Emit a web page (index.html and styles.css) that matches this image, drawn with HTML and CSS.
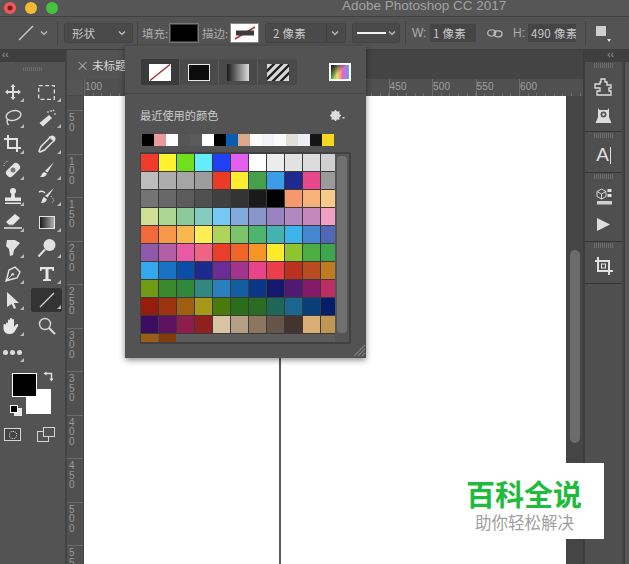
FILE: index.html
```html
<!DOCTYPE html>
<html lang="zh">
<head>
<meta charset="utf-8">
<title>Adobe Photoshop CC 2017</title>
<link rel="stylesheet" href="styles.css">
</head>
<body>
<div class="app">
  <header class="titlebar">
    <div class="lights"><i class="light red"></i><i class="light yellow"></i><i class="light green"></i></div>
    <div class="title">Adobe Photoshop CC 2017</div>
  </header>

  <div class="options">
    <svg class="opt-line" width="18" height="18" viewBox="0 0 18 18"><path d="M2 16 16 2" stroke="#cfcfcf" stroke-width="1.2"/></svg>
    <svg class="chev chev-tool" width="8" height="6" viewBox="0 0 8 6"><path d="M1 1.5 4 4.5 7 1.5" fill="none" stroke="#c4c4c4" stroke-width="1.2"/></svg>
    <span class="sep sep-a"></span>
    <div class="select sel-shape"><span>形状</span><svg class="chev" width="8" height="6" viewBox="0 0 8 6"><path d="M1 1.5 4 4.5 7 1.5" fill="none" stroke="#c4c4c4" stroke-width="1.2"/></svg></div>
    <span class="sep sep-b"></span>
    <span class="opt-label lab-fill">填充:</span>
    <span class="swatch-btn"><i class="fill-black"></i></span>
    <span class="opt-label lab-stroke">描边:</span>
    <span class="swatch-btn stroke-btn"><svg width="24" height="14" viewBox="0 0 24 14"><rect width="24" height="14" fill="#fff"/><path d="M2 13 22 1" stroke="#a8323c" stroke-width="1.5"/><rect x="3" y="4.500" width="18" height="5" fill="#3a3a3a"/></svg></span>
    <div class="select sel-size"><span>2 像素</span><b class="split"></b><svg class="chev" width="8" height="6" viewBox="0 0 8 6"><path d="M1 1.5 4 4.5 7 1.5" fill="none" stroke="#c4c4c4" stroke-width="1.2"/></svg></div>
    <div class="select sel-line"><i class="line-sample"></i><svg class="chev" width="8" height="6" viewBox="0 0 8 6"><path d="M1 1.5 4 4.5 7 1.5" fill="none" stroke="#c4c4c4" stroke-width="1.2"/></svg></div>
    <span class="sep sep-c"></span>
    <span class="opt-label lab-w">W:</span>
    <span class="field field-w">1 像素</span>
    <svg class="link" width="16" height="9" viewBox="0 0 16 9"><g fill="none" stroke="#bdbdbd" stroke-width="1.200"><rect x=".7" y="1" width="8" height="6" rx="3"/><rect x="7" y="1.800" width="8" height="6" rx="3"/></g></svg>
    <span class="opt-label lab-h">H:</span>
    <span class="field field-h">490 像素</span>
    <span class="sep sep-d"></span>
    <span class="path-op"><i></i><b></b></span>
  </div>

  <div class="workspace">
    <aside class="toolbox">
      <div class="collapse">‹‹</div>
      <div class="grip"></div>
      <div class="tools">
        <div class="tool more"><svg width="18" height="18" viewBox="0 0 18 18"><path d="M9 1 11.500 4H10v4h4V6.500L17 9l-3 2.500V10h-4v4h1.500L9 17l-2.500-3H8v-4H4v1.500L1 9l3-2.500V8h4V4H6.500z" fill="#dcdcdc"/></svg></div>
        <div class="tool more"><svg width="17" height="15" viewBox="0 0 17 15"><rect x=".7" y=".7" width="15.600" height="13.600" fill="none" stroke="#dcdcdc" stroke-width="1.300" stroke-dasharray="4 2.500"/></svg></div>
        <div class="tool more"><svg width="18" height="18" viewBox="0 0 18 18"><ellipse cx="9.500" cy="6.500" rx="7.500" ry="4.800" transform="rotate(-15 9.500 6.500)" fill="none" stroke="#dcdcdc" stroke-width="1.400"/><path d="M4 10c-1.500 2-1 4 .5 6" fill="none" stroke="#dcdcdc" stroke-width="1.400"/></svg></div>
        <div class="tool more"><svg width="18" height="18" viewBox="0 0 18 18"><path d="M11 6 14 9 5 17.500 1.500 14z" fill="#e2e2e2"/><path d="M13 1v2M16 5h2M9 3h2M16 1l-1 1" stroke="#e2e2e2" stroke-width="1.200"/></svg></div>
        <div class="tool more"><svg width="20" height="20" viewBox="0 0 20 20"><path d="M5 1v13h13M1 5h13v13" fill="none" stroke="#e2e2e2" stroke-width="2"/></svg></div>
        <div class="tool more"><svg width="18" height="18" viewBox="0 0 18 18"><path d="M12 2l4 4-2 1.500-7.500 7.500L2 17l-1-1 2-4.500L10.500 4z" fill="none" stroke="#e2e2e2" stroke-width="1.500"/><path d="M12 1.500a2.500 2.500 0 0 1 4.500 4.500z" fill="#e2e2e2"/></svg></div>
        <div class="tool more"><svg width="20" height="20" viewBox="0 0 20 20"><rect x="2" y="6" width="16" height="8" rx="3.500" transform="rotate(-45 10 10)" fill="#e4e4e4"/><circle cx="10" cy="10" r="2.500" fill="#777"/><path d="M1 6a5 5 0 0 1 5-5" fill="none" stroke="#e4e4e4" stroke-dasharray="1 1.500"/></svg></div>
        <div class="tool more"><svg width="18" height="18" viewBox="0 0 18 18"><path d="M16 1 9.500 11.500 7 10z" fill="#e2e2e2"/><path d="M6 11c-2 .5-2 3-4 5 3 .5 6-.5 7-3.500z" fill="#e2e2e2"/></svg></div>
        <div class="tool more"><svg width="18" height="18" viewBox="0 0 18 18"><circle cx="9" cy="4" r="3" fill="#e6e6e6"/><path d="M7.500 6h3l.5 4.500h6V14H1v-3.500h6z" fill="#e6e6e6"/><rect x="1" y="15.500" width="16" height="1.500" fill="#e6e6e6"/></svg></div>
        <div class="tool more"><svg width="18" height="18" viewBox="0 0 18 18"><path d="M16 1 9.500 10.500 7 9z" fill="#e2e2e2"/><path d="M6 10c-1.500.5-1.500 3-3 6 3 0 5-1 6-3.500z" fill="#e2e2e2"/><path d="M1 5c2-1 4-1 6 1" stroke="#e2e2e2" stroke-width="1.500" fill="none"/><path d="M13 9l3 4-2 3" fill="none" stroke="#e2e2e2" stroke-dasharray="1 1.300"/></svg></div>
        <div class="tool more"><svg width="20" height="18" viewBox="0 0 20 18"><path d="M12 1l5 4-7 7H6L3 9z" fill="#e6e6e6"/><path d="M3 9l3 3h4" fill="none" stroke="#888"/><path d="M1 15h18" stroke="#e6e6e6" stroke-width="1.500"/></svg></div>
        <div class="tool more"><span class="gradient-ico"></span></div>
        <div class="tool more"><svg width="20" height="20" viewBox="0 0 20 20"><path d="M4 2h8l5 3-6 7-1 5-3 1-1-7-3-3z" fill="#e2e2e2"/></svg></div>
        <div class="tool more"><svg width="20" height="20" viewBox="0 0 20 20"><circle cx="12.500" cy="7" r="6" fill="#e2e2e2"/><path d="M8 11.500 1.500 18.500" stroke="#e2e2e2" stroke-width="2"/></svg></div>
        <div class="tool more"><svg width="18" height="18" viewBox="0 0 18 18"><path d="M11 2 16 7l-3 6-8 2-3 1 1-3 2-8z" fill="none" stroke="#e2e2e2" stroke-width="1.400"/><path d="M3 15 8 10" stroke="#e2e2e2"/><circle cx="8.800" cy="9.200" r="1.300" fill="#e2e2e2"/></svg></div>
        <div class="tool more"><svg width="16" height="16" viewBox="0 0 16 16"><path d="M1 1h14v4h-1.300l-.7-1.800H9.500v9.600L12 13.500V15H4v-1.500l2.500-.7V3.200H3L2.300 5H1z" fill="#e6e6e6"/></svg></div>
        <div class="tool more"><svg width="14" height="18" viewBox="0 0 14 18"><path d="M1 1 13 12H7.800L10 17l-2 1-2.300-5L1 16z" fill="#e2e2e2"/></svg></div>
        <div class="tool more active"><svg width="18" height="18" viewBox="0 0 18 18"><path d="M2 16 16 2" stroke="#d8d8d8" stroke-width="1.200"/></svg></div>
        <div class="tool more"><svg width="20" height="20" viewBox="0 0 20 20"><path d="M3 10V7.500a1 1 0 0 1 2 0V10V4.500a1 1 0 0 1 2 0V9V3a1 1 0 0 1 2 0v6V4a1 1 0 0 1 2 0v7l2-2.500c1.500-1.500 3 0 2 1.500l-3 5c-1 2-2.500 3-5 3-4 0-6-2-6.500-5L.500 9c0-1.500 1.500-1.500 2.500 0z" fill="#e8e8e8"/></svg></div>
        <div class="tool"><svg width="18" height="18" viewBox="0 0 18 18"><circle cx="7" cy="7" r="5.500" fill="none" stroke="#d8d8d8" stroke-width="1.400"/><path d="M11 11l6 6" stroke="#d8d8d8" stroke-width="2.200"/></svg></div>
        <div class="tool more"><span class="dots"><i></i><i></i><i></i></span></div>
      </div>
      <div class="colors">
        <i class="fg"></i><i class="bg"></i>
        <svg class="swap" width="11" height="11" viewBox="0 0 11 11"><path d="M3 2.500h5.500V8" fill="none" stroke="#e0e0e0" stroke-width="1.300"/><path d="M3.500 .5v4L.5 2.500zM6.500 7.500h4L8.500 10.500z" fill="#e0e0e0"/></svg>
        <i class="mini-bg"></i><i class="mini-fg"></i>
      </div>
      <div class="modes">
        <span class="mask"><i></i></span>
        <svg class="more-s" width="18" height="15" viewBox="0 0 18 15"><rect x=".5" y="4.500" width="11" height="10" fill="none" stroke="#d4d4d4"/><rect x="6.500" y=".5" width="11" height="9" fill="#535353" stroke="#d4d4d4"/></svg>
      </div>
    </aside>

    <main class="docs">
      <div class="tabs">
        <div class="tab"><span class="tab-x">×</span><span class="tab-name">未标题-1</span></div>
      </div>
      <div class="doc-body">
        <div class="v-side">
          <div class="corner"></div>
          <div class="v-ruler">
            <div class="v-first"></div>
            <div class="v-cell">50</div><div class="v-cell">100</div><div class="v-cell">150</div><div class="v-cell">200</div><div class="v-cell">250</div><div class="v-cell">300</div><div class="v-cell">350</div><div class="v-cell">400</div><div class="v-cell">450</div><div class="v-cell">500</div><div class="v-cell">550</div>
          </div>
        </div>
        <div class="stage">
          <div class="h-ruler">
            <div class="h-cell">100</div><div class="h-cell">150</div><div class="h-cell">200</div><div class="h-cell">250</div><div class="h-cell">300</div><div class="h-cell">350</div><div class="h-cell">400</div><div class="h-cell">450</div><div class="h-cell">500</div><div class="h-cell">550</div><div class="h-cell">600</div>
          </div>
          <div class="canvas-row">
            <div class="canvas"><i class="guide"></i></div>
            <div class="scroll-gutter"><i class="thumb"></i></div>
          </div>
        </div>
      </div>
    </main>

    <aside class="dock">
      <div class="collapse dock-head">‹‹</div>
      <div class="dock-col">
        <section class="dock-group g1"><div class="grip small"></div>
          <svg width="19" height="19" viewBox="0 0 19 19"><path d="M7 1h4v3h2v3h4v3h-2v3h2v4H3v-4h3v-3H1V6h5V4h1z" fill="none" stroke="#e0e0e0" stroke-width="1.300"/></svg>
          <svg width="17" height="17" viewBox="0 0 17 17"><path d="M3 1l1.500 2h8L14 1v9l2.500 6h-16L3 10z" fill="#dcdcdc"/><circle cx="8.500" cy="7.500" r="3" fill="#565656"/><circle cx="8.500" cy="7.500" r="1.200" fill="#dcdcdc"/></svg>
        </section>
        <section class="dock-group g2"><div class="grip small"></div>
          <span class="char-a">A<i></i></span>
        </section>
        <section class="dock-group g3"><div class="grip small"></div>
          <svg width="16" height="18" viewBox="0 0 16 18"><path d="M5.500 2 10 4.500v5L5.500 12 1 9.500v-5z" fill="none" stroke="#d8d8d8"/><path d="M1 4.500 5.500 7 10 4.500M5.500 7v5" fill="none" stroke="#d8d8d8"/><rect x="11.500" y="2" width="4" height="3" fill="#e0e0e0"/><rect x="11.500" y="7" width="4" height="3" fill="#e0e0e0"/><rect x="1" y="14" width="15" height="3.500" fill="#cfcfcf"/></svg>
          <svg class="play" width="15" height="15" viewBox="0 0 15 15"><path d="M1 1 14 7.500 1 14z" fill="#dedede"/></svg>
        </section>
        <section class="dock-group g4"><div class="grip small"></div>
          <svg width="20" height="20" viewBox="0 0 20 20"><path d="M4 1v14h15M1 5h14v14" fill="none" stroke="#e0e0e0" stroke-width="2"/><rect x="7.500" y="8" width="4" height="4" fill="none" stroke="#e0e0e0"/></svg>
        </section>
        <section class="dock-group g5"></section>
      </div>
      <div class="dock-edge"></div>
    </aside>
  </div>

  <div class="popup">
    <div class="fill-types">
      <div class="types">
        <span class="type pressed"><svg width="22" height="17" viewBox="0 0 22 17"><rect width="22" height="17" fill="#fff"/><path d="M1 16.500 21 .5" stroke="#a52f3a" stroke-width="1.400"/></svg></span>
        <span class="type"><i class="t-solid"></i></span>
        <span class="type"><i class="t-grad"></i></span>
        <span class="type"><svg width="22" height="17" viewBox="0 0 22 17"><rect width="22" height="17" fill="#d8d8d8"/><path d="M-2 9 9-2M-2 17 17-2M4 19 23 0M12 19 24 7" stroke="#222" stroke-width="2.400"/></svg></span>
      </div>
      <span class="picker"><i></i></span>
    </div>
    <div class="recent-head"><span>最近使用的颜色</span>
      <svg width="15" height="11" viewBox="0 0 15 11"><circle cx="5.500" cy="5.500" r="3.300" fill="none" stroke="#dedede" stroke-width="2.400"/><path d="M5.500 0v11M0 5.500h11M1.600 1.600l7.800 7.800M9.400 1.600 1.600 9.400" stroke="#dedede" stroke-width="1.400"/><rect x="12.500" y="7" width="2" height="1.500" fill="#dedede"/></svg>
    </div>
    <div class="recent">
      <i style="background:#000"></i><i style="background:#ea9a9a"></i><i style="background:#fff"></i><i style="background:#565656"></i><i style="background:#5a5a5a"></i><i style="background:#fff"></i><i style="background:#000"></i><i style="background:#0a5cb0"></i><i style="background:#dba98a"></i><i style="background:#fafafa"></i><i style="background:#f2f3f8"></i><i style="background:#fafafa"></i><i style="background:#e0e0d8"></i><i style="background:#eceef2"></i><i style="background:#141414"></i><i style="background:#f4d820"></i>
    </div>
    <div class="presets">
      <div class="preset-grid">
        <i style="background:#f03c2a"></i><i style="background:#fdf22f"></i><i style="background:#6fe01c"></i><i style="background:#62edfd"></i><i style="background:#2040f5"></i><i style="background:#e45ff0"></i><i style="background:#fefefe"></i><i style="background:#ececec"></i><i style="background:#e2e2e2"></i><i style="background:#dcdcdc"></i><i style="background:#d0d0d0"></i>
        <i style="background:#bdbdbd"></i><i style="background:#adadad"></i><i style="background:#a5a5a5"></i><i style="background:#9c9c9c"></i><i style="background:#e93b26"></i><i style="background:#fdec30"></i><i style="background:#46a04a"></i><i style="background:#3a9de8"></i><i style="background:#1e2a90"></i><i style="background:#e8478a"></i><i style="background:#9a9a9a"></i>
        <i style="background:#747474"></i><i style="background:#686868"></i><i style="background:#5c5c5c"></i><i style="background:#505050"></i><i style="background:#404040"></i><i style="background:#333"></i><i style="background:#1a1a1a"></i><i style="background:#000"></i><i style="background:#f4996c"></i><i style="background:#f7b27c"></i><i style="background:#f9c98a"></i>
        <i style="background:#cde096"></i><i style="background:#add695"></i><i style="background:#8bcb98"></i><i style="background:#84cbc0"></i><i style="background:#74c8f2"></i><i style="background:#84a9dc"></i><i style="background:#8896cc"></i><i style="background:#9a82c0"></i><i style="background:#b288c0"></i><i style="background:#c688bc"></i><i style="background:#f0a0c4"></i>
        <i style="background:#f26a3a"></i><i style="background:#f6974a"></i><i style="background:#f9b84e"></i><i style="background:#fdee55"></i><i style="background:#b0d45a"></i><i style="background:#7cc36a"></i><i style="background:#4cb46e"></i><i style="background:#44b2ae"></i><i style="background:#3cb4ea"></i><i style="background:#4486d0"></i><i style="background:#5068b8"></i>
        <i style="background:#8c5aa8"></i><i style="background:#b45ea8"></i><i style="background:#e85aa8"></i><i style="background:#ee6482"></i><i style="background:#ea3e2a"></i><i style="background:#f0642a"></i><i style="background:#f79428"></i><i style="background:#fdea2a"></i><i style="background:#8ec42e"></i><i style="background:#4cae42"></i><i style="background:#3ca64c"></i>
        <i style="background:#34a8ec"></i><i style="background:#1a72c4"></i><i style="background:#0b4ea8"></i><i style="background:#1c2a8e"></i><i style="background:#6a2c96"></i><i style="background:#a0348e"></i><i style="background:#e84488"></i><i style="background:#ea3e4c"></i><i style="background:#bc3020"></i><i style="background:#b84c20"></i><i style="background:#c07a20"></i>
        <i style="background:#6e9a14"></i><i style="background:#3a8a2c"></i><i style="background:#30883a"></i><i style="background:#308880"></i><i style="background:#2a80bc"></i><i style="background:#135ea2"></i><i style="background:#0a3688"></i><i style="background:#14186e"></i><i style="background:#501a72"></i><i style="background:#821a68"></i><i style="background:#be2c66"></i>
        <i style="background:#961c10"></i><i style="background:#9c3412"></i><i style="background:#a05e12"></i><i style="background:#a69818"></i><i style="background:#487a0c"></i><i style="background:#2a6e1a"></i><i style="background:#2a6c24"></i><i style="background:#1e6656"></i><i style="background:#1a6690"></i><i style="background:#0a3e78"></i><i style="background:#041e6a"></i>
        <i style="background:#3c0e62"></i><i style="background:#5e1260"></i><i style="background:#8e1c4e"></i><i style="background:#902020"></i><i style="background:#d8c4a4"></i><i style="background:#b49e84"></i><i style="background:#8c7660"></i><i style="background:#64544a"></i><i style="background:#44342e"></i><i style="background:#d8ae74"></i><i style="background:#c09656"></i>
        <i class="short" style="background:#9a5e16"></i><i class="short" style="background:#843c0a"></i>
      </div>
      <div class="preset-scroll"><i></i></div>
    </div>
    <svg class="resize" width="11" height="11" viewBox="0 0 11 11"><path d="M0 11 11 0M4 11 11 4M8 11 11 8" stroke="#808080" stroke-width="1.200"/></svg>
  </div>

  <div class="mark">
    <div class="mark-title">百科全说</div>
    <div class="mark-sub">助你轻松解决</div>
  </div>
</div>
</body>
</html>
```

FILE: styles.css
```css
* { box-sizing: border-box; }
html, body { margin: 0; height: 100%; overflow: hidden; }
body { font-family: "Liberation Sans", "Noto Sans CJK SC", sans-serif; background: #535353; color: #c8c8c8; }
i, b { display: block; font-style: normal; }

.app { position: relative; width: 629px; height: 564px; display: flex; flex-direction: column; overflow: hidden; }

.titlebar { height: 17px; flex: none; display: flex; align-items: center; background: #565656; border-bottom: 1px solid #3f3f3f; position: relative; }
.lights { display: flex; gap: 9px; padding-left: 4px; margin-top: -1px; }
.light { width: 12px; height: 12px; border-radius: 50%; }
.red { background: radial-gradient(circle, #7c1a1a 0 2px, #f0565a 3px); }
.yellow { background: #f5b935; }
.green { background: #45c243; }
.title { margin-left: 284px; margin-top: -5px; font-size: 13.500px; color: #a2a2a2; white-space: nowrap; }

.options { height: 33px; flex: none; display: flex; align-items: center; background: #535353; border-bottom: 1px solid #3d3d3d; font-family: "Noto Sans CJK SC", sans-serif; font-size: 11.500px; }
.opt-line { margin-left: 17px; }
.chev-tool { margin-left: 5px; }
.sep { width: 1px; height: 24px; background: #464646; flex: none; }
.sep-a { margin-left: 9px; }
.sep-b { margin-left: 4px; }
.sep-c { margin-left: 5px; }
.sep-d { margin-left: 9px; }
.select { height: 20px; display: flex; align-items: center; justify-content: space-between; background: #4a4a4a; border: 1px solid #444; padding: 0 6px 0 7px; border-radius: 2px; color: #c8c8c8; flex: none; }
.sel-shape { width: 69px; margin-left: 6px; }
.sel-size { width: 81px; margin-left: 6px; letter-spacing: .3px; }
.split { width: 1px; height: 18px; background: #3e3e3e; margin-left: auto; margin-right: 4px; }
.sel-line { width: 48px; margin-left: 6px; padding-left: 4px; padding-right: 3px; }
.line-sample { width: 29px; height: 2px; background: #f2f2f2; }
.opt-label { flex: none; color: #adadad; }
.lab-fill { margin-left: 4px; width: 27px; }
.lab-stroke { margin-left: 3px; width: 28px; }
.swatch-btn { width: 30px; height: 20px; border: 1px solid #777; background: #3e3e3e; display: flex; align-items: center; justify-content: center; flex: none; }
.fill-black { width: 26px; height: 16px; background: #000; }
.stroke-btn { background: #fff; width: 29px; border-color: #888; }
.lab-w { margin-left: 6px; width: 18px; font-family: "Liberation Sans", sans-serif; font-size: 12px; }
.lab-h { margin-left: 10px; width: 15px; font-family: "Liberation Sans", sans-serif; font-size: 12px; }
.field { height: 18px; background: #454545; color: #c8c8c8; display: flex; align-items: center; padding-left: 3px; white-space: nowrap; overflow: hidden; letter-spacing: .3px; flex: none; }
.field-w { width: 46px; }
.field-h { width: 48px; }
.link { margin-left: 11px; }
.path-op { position: relative; width: 12px; height: 18px; margin-left: 10px; }
.path-op i { width: 10px; height: 10px; background: #cfcfcf; margin-top: 2px; }
.path-op b { position: absolute; right: -3px; bottom: 0; width: 0; height: 0; border: 2px solid transparent; border-top: 3px solid #e0e0e0; border-bottom: 0; }

.workspace { flex: 1; min-height: 0; display: flex; }

.toolbox { width: 67px; flex: none; background: #535353; border-right: 2px solid #434343; }
.collapse { height: 12px; background: #3f3f3f; color: #9c9c9c; font-size: 10px; line-height: 10px; padding-left: 2px; }
.grip { height: 17px; background: repeating-linear-gradient(90deg, #6a6a6a 0 1px, transparent 1px 2px) center 5px / 20px 4px no-repeat; }
.tools { display: grid; grid-template-columns: 25px 31px; column-gap: 6px; grid-auto-rows: 26px; }
.tool { position: relative; display: flex; align-items: center; justify-content: center; border-radius: 2px; }
.tool.more::after { content: ""; position: absolute; right: 1px; bottom: 3px; border: 2px solid transparent; border-right-color: #b8b8b8; border-bottom-color: #b8b8b8; }
.tool.active { background: #333; height: 24px; margin-top: 1px; }
.gradient-ico { width: 16px; height: 13px; border: 1px solid #e4e4e4; background: linear-gradient(90deg, #1a1a1a, #b0b0b0); }
.dots { display: flex; gap: 2px; }
.dots i { width: 5px; height: 5px; border-radius: 50%; background: #dcdcdc; }
.colors { position: relative; height: 52px; margin-top: 8px; }
.colors i { position: absolute; }
.fg { left: 12px; top: 0; width: 25px; height: 24px; background: #000; border: 1px solid #fff; z-index: 1; }
.bg { left: 26px; top: 16px; width: 25px; height: 25px; background: #fff; }
.swap { position: absolute; left: 43px; top: -2px; }
.mini-fg { left: 10px; top: 32px; width: 8px; height: 8px; background: #000; border: 1px solid #fff; }
.mini-bg { left: 14px; top: 35px; width: 8px; height: 8px; background: #e8e8e8; }
.modes { display: flex; align-items: center; gap: 16px; padding-left: 4px; margin-top: 2px; }
.mask { width: 17px; height: 13px; border: 1px solid #d4d4d4; display: flex; align-items: center; justify-content: center; background: #444; }
.mask i { width: 8px; height: 8px; border-radius: 50%; border: 1px dotted #e8e8e8; }

.docs { flex: 1; min-width: 0; display: flex; flex-direction: column; background: #434343; }
.tabs { height: 29px; flex: none; background: #444; }
.tab { width: 120px; height: 29px; background: #535353; display: flex; align-items: center; font-family: "Noto Sans CJK SC", sans-serif; font-size: 11.500px; color: #d8d8d8; }
.tab-x { margin-left: 9px; width: 16px; font-size: 13px; color: #b0b0b0; }
.doc-body { flex: 1; min-height: 0; display: flex; }
.v-side { width: 17px; flex: none; display: flex; flex-direction: column; background: #505050; }
.corner { height: 17px; flex: none; background: #555; border-bottom: 1px solid #494949; border-right: 1px solid #494949; }
.v-ruler { flex: 1; min-height: 0; overflow: hidden; border-right: 1px solid #454545; }
.v-first { height: 14px; }
.v-cell { height: 43.500px; border-top: 1px solid #6a6a6a; width: 100%; padding: 2px 8px 0 2px; font-size: 10px; line-height: 9.500px; color: #989898; word-break: break-all; overflow: hidden; }
.stage { flex: 1; min-width: 0; display: flex; flex-direction: column; }
.h-ruler { height: 17px; flex: none; display: flex; background-color: #505050; background-image: repeating-linear-gradient(90deg, #6c6c6c 0 1px, transparent 1px 8.700px); background-size: 100% 3px; background-position: 0 bottom; background-repeat: no-repeat; overflow: hidden; }
.h-cell { width: 43.500px; flex: none; border-left: 1px solid #6c6c6c; padding-left: 0; font-size: 10px; line-height: 16px; color: #a0a0a0; letter-spacing: .2px; }
.canvas-row { flex: 1; min-height: 0; display: flex; }
.canvas { width: 482px; flex: none; background: #fff; position: relative; }
.guide { position: absolute; left: 195px; top: 0; bottom: 0; width: 2px; background: #5a5a5a; }
.scroll-gutter { flex: 1; background: #454545; position: relative; }
.thumb { position: absolute; left: 4px; top: 154px; width: 10px; height: 193px; border-radius: 5px; background: #6b6b6b; }

.dock { width: 46px; flex: none; display: flex; flex-wrap: wrap; align-content: flex-start; background: #444; border-left: 1px solid #3c3c3c; }
.dock-head { width: 100%; height: 12px; text-align: center; padding-left: 8px; background: #3f3f3f; }
.dock-col { width: 38px; background: #4f4f4f; height: 502px; border-left: 1px solid #3d3d3d; }
.dock-edge { width: 5px; height: 502px; background: #565656; margin-left: 2px; border-left: 1px solid #3c3c3c; }
.dock-group { display: flex; flex-direction: column; align-items: center; border-bottom: 1px solid #343434; }
.grip.small { height: 5px; width: 20px; flex: none; margin: 1px 0 0; background: repeating-linear-gradient(90deg, #6e6e6e 0 1px, transparent 1px 2px); }
.g1 { height: 70px; gap: 10px; }
.g2 { height: 41px; }
.g3 { height: 69px; gap: 8px; }
.play { margin-top: 4px; }
.g4 { height: 42px; gap: 8px; }
.g5 { height: 280px; border-bottom: 0; }
.char-a { display: flex; align-items: flex-end; gap: 1px; font-size: 19px; line-height: 18px; color: #e0e0e0; margin-top: 8px; }
.char-a i { width: 1px; height: 17px; background: #e0e0e0; }

.popup { position: absolute; left: 125px; top: 46px; width: 241px; height: 312px; background: #535353; box-shadow: 0 2px 6px rgba(0,0,0,.45); padding: 13px 15px 0 15px; }
.fill-types { display: flex; justify-content: space-between; align-items: flex-start; height: 35px; border-bottom: 1px solid #474747; margin: 0 -15px; padding: 0 15px 0 16px; }
.types { display: flex; height: 26px; background: #4a4a4a; }
.type { width: 39px; display: flex; align-items: center; justify-content: center; border-right: 1px solid #5a5a5a; }
.type:last-child { border-right: 0; }
.type.pressed { background: #3b3b3b; }
.t-solid { width: 22px; height: 17px; background: #0c0c0c; border: 1px solid #e8e8e8; }
.t-grad { width: 22px; height: 17px; background: linear-gradient(90deg, #1a1a1a, #dcdcdc); }
.picker { width: 22px; height: 18px; margin-top: 4px; background: #fff; padding: 2px; }
.picker i { height: 100%; background: linear-gradient(135deg, #2a2a2a 10%, transparent 50%), linear-gradient(90deg, #3ab54a, #f0e060, #f060c0, #60a0ff); }
.recent-head { display: flex; align-items: center; justify-content: space-between; height: 40px; padding: 2px 6px 0 0; font-family: "Noto Sans CJK SC", sans-serif; font-size: 11.200px; color: #cccccc; }
.recent { display: grid; grid-template-columns: repeat(16, 12px); grid-auto-rows: 12px; padding: 0 1px 0 2px; height: 14px; }
.recent i { width: 11.500px; height: 12px; }
.presets { display: flex; height: 192px; margin-top: 4px; background: #414141; padding: 2px 2px 0 1px; }
.preset-grid { width: 196px; display: grid; grid-template-columns: repeat(11, 17px); gap: 1px; grid-auto-rows: 17px; align-content: start; background: linear-gradient(#3a3a3a 0 180px, #5c5c5c 180px); overflow: hidden; height: 188px; }
.preset-grid i { width: 17px; height: 17px; }
.preset-grid .short { height: 10px; }
.preset-scroll { width: 14px; height: 188px; background: #555; padding: 2px 2px 0; }
.preset-scroll i { height: 177px; background: #707070; border-radius: 4px; }
.resize { position: absolute; right: 1px; bottom: 2px; }

.mark { position: absolute; left: 440px; top: 463px; width: 164px; height: 76px; background: #fff; padding: 14px 0 0 26px; font-family: "Noto Sans CJK SC", sans-serif; }
.mark-title { font-size: 29px; line-height: 33px; font-weight: 700; color: #1fbb3c; white-space: nowrap; }
.mark-sub { font-size: 16.500px; line-height: 20px; color: #a0a0a0; margin-left: 9px; margin-top: 2px; white-space: nowrap; }
```
